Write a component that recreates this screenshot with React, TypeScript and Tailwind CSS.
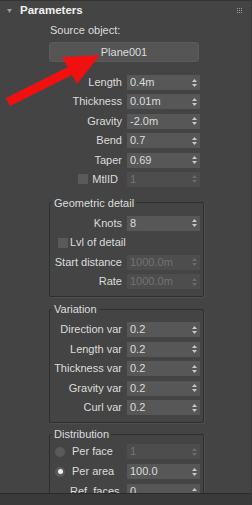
import React from "react";

function Arrows({ dim }: { dim?: boolean }) {
  const c = dim ? "#6a6a6a" : "#c8c8c8";
  return (
    <svg width="5" height="8" viewBox="0 0 5 8" className="shrink-0">
      <polygon points="0,3 2.5,0 5,3" fill={c} />
      <polygon points="0,5 5,5 2.5,8" fill={c} />
    </svg>
  );
}

function Field({ value, disabled }: { value: string; disabled?: boolean }) {
  return (
    <div
      className={`w-[73px] h-[15px] flex items-center justify-between pl-[3px] pr-[3px] ${
        disabled ? "bg-[#4d4d4d] text-[#727272]" : "bg-[#575757] text-[#dcdcdc]"
      }`}
    >
      <span className="leading-none">{value}</span>
      <Arrows dim={disabled} />
    </div>
  );
}

function Row({
  label,
  value,
  disabled,
  labelW,
}: {
  label: string;
  value: string;
  disabled?: boolean;
  labelW: string;
}) {
  return (
    <div className="flex items-center h-[15px]">
      <div className={`${labelW} text-right pr-[5px] leading-none whitespace-nowrap`}>{label}</div>
      <Field value={value} disabled={disabled} />
    </div>
  );
}

function Check() {
  return <div className="w-[10px] h-[10px] bg-[#5a5a5a] shrink-0" />;
}

function Radio({ on }: { on?: boolean }) {
  return (
    <div className="w-[10px] h-[10px] rounded-full bg-[#5a5a5a] flex items-center justify-center shrink-0">
      {on && <div className="w-[5px] h-[5px] rounded-full bg-[#f0f0f0]" />}
    </div>
  );
}

function Group({
  title,
  className,
  children,
}: {
  title: string;
  className: string;
  children: React.ReactNode;
}) {
  return (
    <fieldset
      className={`ml-[49px] w-[155px] border border-[#2e2e2e] rounded-[2px] shadow-[1px_1px_0_#4f4f4f] ${className}`}
    >
      <legend className="ml-[2px] px-[2px] leading-[14px] text-[#dcdcdc]">{title}</legend>
      {children}
    </fieldset>
  );
}

export default function App() {
  return (
    <div className="w-[252px] h-[505px] bg-[#444444] flex flex-col font-['Liberation_Sans',Arial,sans-serif] text-[11px] text-[#dcdcdc] relative overflow-hidden border-r border-[#393939]">
      <div className="h-[493px] overflow-hidden border-t border-[#333333] flex flex-col shrink-0">
        {/* header */}
        <div className="h-[19px] flex items-center shrink-0">
          <svg width="5" height="4" viewBox="0 0 5 4" className="ml-[7px]">
            <polygon points="0,0 5,0 2.5,4" fill="#9a9a9a" />
          </svg>
          <span className="ml-[8px] font-bold text-[11.5px] text-[#f0f0f0] leading-none">Parameters</span>
          <div className="ml-auto mr-[9px] grid grid-cols-3 gap-[1px]">
            {Array.from({ length: 9 }).map((_, i) => (
              <div key={i} className="w-[1px] h-[1px] bg-[#9a9a9a]" />
            ))}
          </div>
        </div>

        <div className="mt-[2px] h-[16px] flex items-center pl-[50px] shrink-0">
          <span className="leading-none">Source object:</span>
        </div>

        <div className="mt-[4px] ml-[49px] w-[150px] h-[20px] shrink-0 rounded-[3px] bg-[#555555] border border-[#5b5b5b] flex items-center justify-center">
          <span className="leading-none">Plane001</span>
        </div>

        <div className="mt-[13px] flex flex-col gap-[4.4px] shrink-0">
          <Row labelW="w-[127px]" label="Length" value="0.4m" />
          <Row labelW="w-[127px]" label="Thickness" value="0.01m" />
          <Row labelW="w-[127px]" label="Gravity" value="-2.0m" />
          <Row labelW="w-[127px]" label="Bend" value="0.7" />
          <Row labelW="w-[127px]" label="Taper" value="0.69" />
          <div className="flex items-center h-[15px]">
            <div className="w-[127px] flex items-center justify-end pr-[9px]">
              <Check />
              <span className="ml-[4px] leading-none">MtlID</span>
            </div>
            <Field value="1" disabled />
          </div>
        </div>

        <Group title="Geometric detail" className="mt-[9px] pt-[6px] pb-[7px] shrink-0">
          <div className="flex flex-col gap-[4.5px]">
            <Row labelW="w-[77px]" label="Knots" value="8" />
            <div className="flex items-center h-[15px] pl-[8px]">
              <Check />
              <span className="ml-[2px] leading-none">Lvl of detail</span>
            </div>
            <Row labelW="w-[77px]" label="Start distance" value="1000.0m" disabled />
            <Row labelW="w-[77px]" label="Rate" value="1000.0m" disabled />
          </div>
        </Group>

        <Group title="Variation" className="mt-[5px] pt-[6px] pb-[7px] shrink-0">
          <div className="flex flex-col gap-[4.5px]">
            <Row labelW="w-[77px]" label="Direction var" value="0.2" />
            <Row labelW="w-[77px]" label="Length var" value="0.2" />
            <Row labelW="w-[77px]" label="Thickness var" value="0.2" />
            <Row labelW="w-[77px]" label="Gravity var" value="0.2" />
            <Row labelW="w-[77px]" label="Curl var" value="0.2" />
          </div>
        </Group>

        <Group title="Distribution" className="mt-[4px] pt-[3px] pb-[7px] shrink-0">
          <div className="flex flex-col gap-[5px]">
            <div className="flex items-center h-[15px]">
              <div className="w-[77px] flex items-center pl-[5px]">
                <Radio />
                <span className="ml-[7px] leading-none">Per face</span>
              </div>
              <Field value="1" disabled />
            </div>
            <div className="flex items-center h-[15px]">
              <div className="w-[77px] flex items-center pl-[5px]">
                <Radio on />
                <span className="ml-[7px] leading-none">Per area</span>
              </div>
              <Field value="100.0" />
            </div>
            <div className="flex items-center h-[15px]">
              <div className="w-[77px] flex items-center pl-[20px]">
                <span className="leading-none">Ref. faces</span>
              </div>
              <Field value="0" />
            </div>
          </div>
        </Group>
      </div>
      <div className="flex-1 border-t border-[#2a2a2a] bg-[#3a3a3a]" />

      {/* red annotation arrow */}
      <svg
        className="absolute left-0 top-0 pointer-events-none"
        width="252"
        height="505"
        viewBox="0 0 252 505"
      >
        <line x1="8" y1="102" x2="72" y2="70" stroke="#f01010" strokeWidth="9" />
        <polygon points="100,55 62,57 77,84" fill="#f01010" />
      </svg>
    </div>
  );
}
